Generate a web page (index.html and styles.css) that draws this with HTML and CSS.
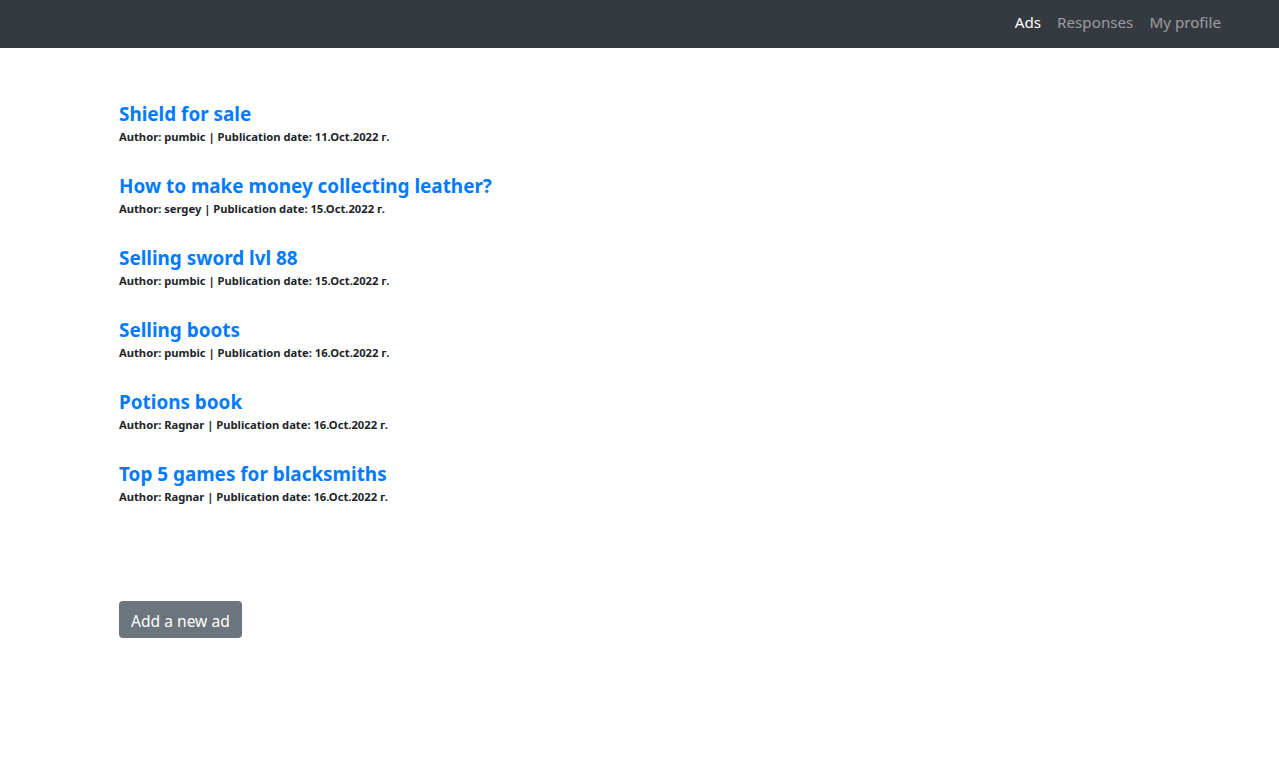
FILE: index.html
```html
<!DOCTYPE html>
<html lang="en">
<head>
<meta charset="utf-8">
<title>Ads</title>
<link rel="stylesheet" href="styles.css">
</head>
<body>
<header class="navbar">
  <nav class="nav">
    <a class="nav-link active" href="#">Ads</a>
    <a class="nav-link" href="#">Responses</a>
    <a class="nav-link" href="#">My profile</a>
  </nav>
</header>
<main class="content">
  <ul class="ads">
    <li class="ad">
      <a class="ad-title" href="#">Shield for sale</a>
      <div class="ad-meta">Author: pumbic | Publication date: 11.Oct.2022 г.</div>
    </li>
    <li class="ad">
      <a class="ad-title" href="#">How to make money collecting leather?</a>
      <div class="ad-meta">Author: sergey | Publication date: 15.Oct.2022 г.</div>
    </li>
    <li class="ad">
      <a class="ad-title" href="#">Selling sword lvl 88</a>
      <div class="ad-meta">Author: pumbic | Publication date: 15.Oct.2022 г.</div>
    </li>
    <li class="ad">
      <a class="ad-title" href="#">Selling boots</a>
      <div class="ad-meta">Author: pumbic | Publication date: 16.Oct.2022 г.</div>
    </li>
    <li class="ad">
      <a class="ad-title" href="#">Potions book</a>
      <div class="ad-meta">Author: Ragnar | Publication date: 16.Oct.2022 г.</div>
    </li>
    <li class="ad">
      <a class="ad-title" href="#">Top 5 games for blacksmiths</a>
      <div class="ad-meta">Author: Ragnar | Publication date: 16.Oct.2022 г.</div>
    </li>
  </ul>
  <div class="actions">
    <a class="btn" href="#">Add a new ad</a>
  </div>
</main>
</body>
</html>
```
FILE: styles.css
```css
* { box-sizing: border-box; }
html, body { margin: 0; padding: 0; }
body {
  font-family: "Noto Sans", "Open Sans", sans-serif;
  color: #212529;
  background: #fff;
}
.navbar {
  height: 48px;
  background: #343a40;
  display: flex;
  justify-content: flex-end;
  align-items: center;
  padding: 0 50px 4px 0;
}
.nav { display: flex; }
.nav-link {
  font-size: 15.2px;
  color: rgba(255,255,255,.5);
  text-decoration: none;
  padding: 0 8px;
}
.nav-link.active { color: #fff; }
.content { padding: 54px 0 0 119px; }
.ads { list-style: none; margin: 0; padding: 0; display: flex; flex-direction: column; }
.ad { height: 72px; display: flex; flex-direction: column; }
.ad-title {
  color: #007bff;
  font-weight: 700;
  font-size: 18.9px;
  line-height: 24px;
  text-decoration: none;
}
.ad-meta {
  font-size: 11.2px;
  font-weight: 700;
  line-height: 16px;
  padding-top: 3px;
  color: #212529;
}
.actions { margin-top: 67px; }
.btn {
  display: inline-block;
  background: #6c757d;
  color: #fff;
  text-decoration: none;
  font-size: 15.6px;
  line-height: 24px;
  padding: 8px 12px 5px;
  border-radius: 4px;
  height: 37px;
}
```
